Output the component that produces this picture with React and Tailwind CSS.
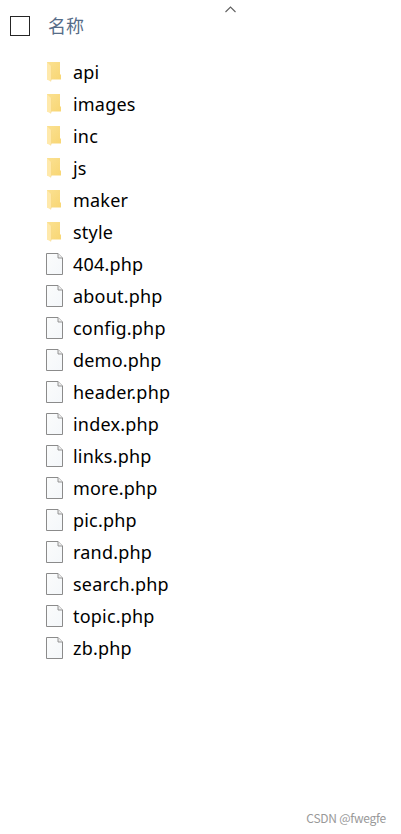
const folders = ['api', 'images', 'inc', 'js', 'maker', 'style']

const files = [
  '404.php',
  'about.php',
  'config.php',
  'demo.php',
  'header.php',
  'index.php',
  'links.php',
  'more.php',
  'pic.php',
  'rand.php',
  'search.php',
  'topic.php',
  'zb.php',
]

function FolderIcon() {
  return (
    <svg width="20" height="24" viewBox="0 0 20 24" className="shrink-0">
      <defs>
        <linearGradient id="folderBack" x1="0" y1="0" x2="1" y2="1">
          <stop offset="0" stopColor="#fbe192" />
          <stop offset="1" stopColor="#f8d674" />
        </linearGradient>
      </defs>
      <path d="M2 2h13v12l1 1v4.5h-14z" fill="url(#folderBack)" />
      <path d="M2 2.3l4.3 4v12.7L5.7 21.5L2 19.5z" fill="#ffe9ab" />
      <path d="M6.4 6.3v12.7L5.7 21.5" fill="none" stroke="#f3d07a" strokeWidth="0.5" />
    </svg>
  )
}

function FileIcon() {
  return (
    <svg width="20" height="24" viewBox="0 0 20 24" className="shrink-0">
      <defs>
        <linearGradient id="paper" x1="0" y1="0" x2="1" y2="1">
          <stop offset="0" stopColor="#fbfcfc" />
          <stop offset="1" stopColor="#f4f7fa" />
        </linearGradient>
      </defs>
      <path d="M1.5 1.5h11.5l4.5 4.5v16.5h-16z" fill="url(#paper)" stroke="#8b8b8b" />
      <path d="M13 1.5v4.5h4.5" fill="#ececec" stroke="#8b8b8b" strokeWidth="0.9" />
    </svg>
  )
}

function Row({ name, icon }) {
  return (
    <li className="flex h-8 items-center gap-2">
      {icon}
      <span className="text-[18px] leading-8 tracking-[0.2px]">{name}</span>
    </li>
  )
}

export default function App() {
  return (
    <div className="flex h-[834px] w-[401px] flex-col bg-white font-['Noto_Sans','Noto_Sans_CJK_SC',sans-serif] text-black">
      <div className="relative flex h-14 shrink-0 items-start pl-[10px]">
        <span className="mt-4 size-5 border border-[#252525]" />
        <span className="ml-[18px] mt-[11px] font-['Noto_Sans_CJK_SC',sans-serif] text-[18px] leading-7 text-[#566c88]">名称</span>
        <svg width="12" height="7" viewBox="0 0 12 7" className="absolute left-[225px] top-[6px]">
          <path d="M0.5 6L5.5 1L10.5 6" fill="none" stroke="#606060" strokeWidth="1.1" />
        </svg>
      </div>

      <ul className="pl-[45px]">
        {folders.map((name) => (
          <Row key={name} name={name} icon={<FolderIcon />} />
        ))}
        {files.map((name) => (
          <Row key={name} name={name} icon={<FileIcon />} />
        ))}
      </ul>

      <div className="mt-auto pb-[8px] pr-[15px] text-right font-['Noto_Sans_CJK_SC',sans-serif] text-[12px] leading-4 tracking-[-0.25px] text-[#999999]">
        CSDN @fwegfe
      </div>
    </div>
  )
}
